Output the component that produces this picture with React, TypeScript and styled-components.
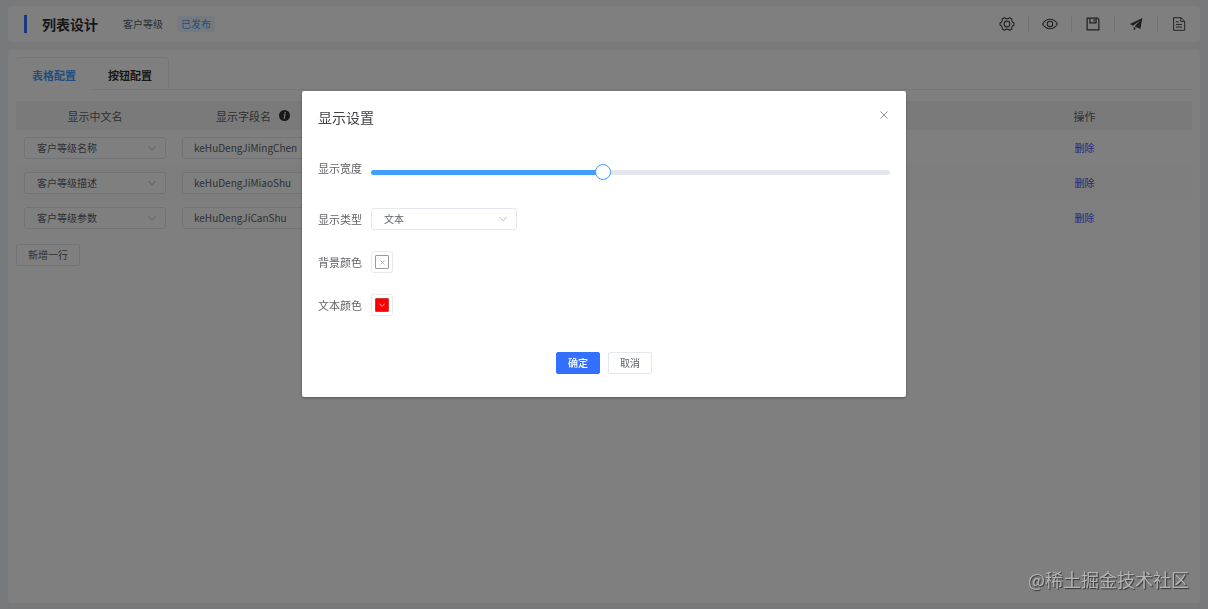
import React, { useState } from 'react';
import styled, { createGlobalStyle } from 'styled-components';

const GlobalStyle = createGlobalStyle`
  * { box-sizing: border-box; }
  body {
    margin: 0;
    background: #eff2f4;
    color: #606266;
    font-family: "Noto Sans CJK SC", sans-serif;
    font-size: 10px;
    line-height: 16px;
  }
  button, input, select { font: inherit; color: inherit; margin: 0; }
`;

const Page = styled.div`
  min-height: 100vh;
  padding: 6px 8px;
  display: flex;
  flex-direction: column;
  gap: 8px;
`;

const TopBar = styled.header`
  height: 36px;
  padding: 0 14px 0 16px;
  display: flex;
  align-items: center;
  background: #fff;
  border-radius: 4px;
`;

const Accent = styled.span`
  width: 3px;
  height: 18px;
  margin-right: 15px;
  background: #3370ff;
`;

const PageTitle = styled.h1`
  margin: 0 25px 0 0;
  font-size: 14px;
  line-height: 20px;
  font-weight: 700;
  color: #303133;
`;

const SubTitle = styled.span`
  margin-right: 14px;
`;

const Tag = styled.span`
  padding: 0 4px;
  border-radius: 2px;
  background: #ecf5ff;
  color: #409eff;
`;

const Tools = styled.nav`
  margin-left: auto;
  display: flex;
  align-items: center;
`;

const ToolButton = styled.button`
  width: 14px;
  height: 16px;
  padding: 0;
  border: 0;
  background: none;
  color: #404246;
  display: flex;
  align-items: center;
  justify-content: center;
  cursor: pointer;
  svg { flex: none; }
`;

const Divider = styled.span`
  width: 1px;
  height: 16px;
  margin: 0 14px;
  background: #e4e7ed;
`;

const Panel = styled.main`
  flex: 1;
  padding: 7px 8px;
  background: #fff;
  border-radius: 4px;
`;

const Tabs = styled.div`
  display: flex;
  height: 33px;
  margin-bottom: 11px;
`;

const Tab = styled.button<{ $active?: boolean }>`
  padding: 2px 16px 0;
  border: 0 solid #ebedf0;
  border-top-width: 1px;
  border-right-width: ${p => (p.$active ? 0 : 1)}px;
  border-bottom-width: ${p => (p.$active ? 0 : 1)}px;
  border-radius: ${p => (p.$active ? '4px 0 0 0' : '0 4px 0 0')};
  background: none;
  font-size: 11px;
  font-weight: 700;
  color: ${p => (p.$active ? '#409eff' : '#303133')};
  cursor: pointer;
`;

const TabRail = styled.span`
  flex: 1;
  border-bottom: 1px solid #ebedf0;
`;

const Table = styled.table`
  width: 100%;
  table-layout: fixed;
  border-collapse: collapse;
  text-align: center;
`;

const HeadCell = styled.th`
  height: 29px;
  padding: 0;
  background: #f4f4f5;
  font-size: 11px;
  font-weight: 400;
`;

const HeadLabel = styled.span`
  display: inline-flex;
  align-items: center;
  gap: 8px;
`;

const Row = styled.tr`
  &:nth-child(even) { background: #fafafa; }
`;

const Cell = styled.td`
  height: 35px;
  padding: 0 8px;
`;

const SelectBox = styled.span<{ $width?: string }>`
  display: grid;
  width: ${p => p.$width || '100%'};
  align-items: center;
  > * { grid-area: 1 / 1; }
  svg { justify-self: end; margin-right: 10px; pointer-events: none; }
`;

const SelectField = styled.select`
  appearance: none;
  width: 100%;
  height: 22px;
  padding: 0 24px 0 12px;
  border: 1px solid #e4e7ed;
  border-radius: 3px;
  background: #fff;
`;

const TextField = styled.input`
  display: block;
  width: 100%;
  height: 22px;
  padding: 0 11px;
  border: 1px solid #e4e7ed;
  border-radius: 3px;
  background: #fff;
`;

const LinkButton = styled.button`
  padding: 0;
  border: 0;
  background: none;
  color: #4a58f5;
  cursor: pointer;
`;

const Button = styled.button<{ $primary?: boolean }>`
  height: 22px;
  padding: 0 11px;
  border: 1px solid ${p => (p.$primary ? '#3370ff' : '#e4e7ed')};
  border-radius: 2px;
  background: ${p => (p.$primary ? '#3370ff' : '#fff')};
  color: ${p => (p.$primary ? '#fff' : '#606266')};
  font-weight: ${p => (p.$primary ? 500 : 400)};
  cursor: pointer;
`;

const AddArea = styled.div`
  padding-top: 9px;
`;

const Overlay = styled.div`
  position: fixed;
  inset: 0;
  background: rgba(0, 0, 0, 0.5);
`;

const Dialog = styled.section`
  width: 50%;
  margin: 15vh auto 0;
  padding: 16px 16px 23px;
  background: #fff;
  border-radius: 2px;
  box-shadow: 0 1px 3px rgba(0, 0, 0, 0.3);
`;

const DialogHead = styled.div`
  display: flex;
  align-items: flex-start;
  justify-content: space-between;
  margin-bottom: 30px;
`;

const DialogTitle = styled.h2`
  margin: 0;
  font-size: 14px;
  line-height: 20px;
  font-weight: 400;
  color: #404246;
`;

const CloseButton = styled.button`
  width: 12px;
  height: 16px;
  padding: 0;
  border: 0;
  background: none;
  color: #909399;
  display: flex;
  align-items: center;
  justify-content: center;
  cursor: pointer;
`;

const Form = styled.form`
  display: grid;
  grid-template-columns: 44px 1fr;
  column-gap: 9px;
  row-gap: 21px;
  align-items: center;
`;

const Label = styled.label<{ $top?: boolean }>`
  font-size: 11px;
  line-height: 22px;
  white-space: nowrap;
  padding-bottom: ${p => (p.$top ? 8 : 0)}px;
`;

const Slider = styled.input`
  appearance: none;
  width: 100%;
  height: 16px;
  background: none;
  &::-webkit-slider-runnable-track {
    height: 5px;
    border-radius: 3px;
    background: linear-gradient(to right, #409eff var(--fill), #e4e7ed var(--fill));
  }
  &::-webkit-slider-thumb {
    appearance: none;
    width: 16px;
    height: 16px;
    margin-top: -6px;
    border: 1px solid #409eff;
    border-radius: 50%;
    background: #fff;
  }
`;

const ColorButton = styled.button`
  width: 22px;
  height: 22px;
  padding: 3px;
  border: 1px solid #e9e9e9;
  border-radius: 3px;
  background: #fff;
  cursor: pointer;
`;

const Swatch = styled.span<{ $color?: string }>`
  width: 14px;
  height: 14px;
  display: flex;
  align-items: center;
  justify-content: center;
  border: 1px solid ${p => (p.$color ? '#c83c3c' : '#999')};
  border-radius: 1px;
  background: ${p => p.$color || '#fff'};
  color: ${p => (p.$color ? '#fff' : '#999')};
`;

const Actions = styled.div`
  display: flex;
  justify-content: center;
  gap: 8px;
  padding-top: 36px;
`;

const Watermark = styled.div`
  position: fixed;
  right: 19px;
  bottom: 18px;
  font: 18px/24px "Noto Sans CJK SC", sans-serif;
  color: #b4b4b4;
  text-shadow: 1px 1px 1px #333;
`;

const Icon = ({ size = 14, children }: { size?: number; children: React.ReactNode }) => (
  <svg width={size} height={size} viewBox="0 0 16 16" fill="none" stroke="currentColor" strokeWidth="1.1" aria-hidden="true">
    {children}
  </svg>
);

const Chevron = ({ size = 8, color = '#b4b8c0' }: { size?: number; color?: string }) => (
  <svg width={size} height={size} viewBox="0 0 8 8" fill="none" stroke={color} aria-hidden="true">
    <path d="M0.5 2.2 4 5.8 7.5 2.2" />
  </svg>
);

const Cross = ({ size }: { size: number }) => (
  <svg width={size} height={size} viewBox="0 0 8 8" fill="none" stroke="currentColor" aria-hidden="true">
    <path d="M0.5 0.5 7.5 7.5M7.5 0.5 0.5 7.5" />
  </svg>
);

const tools = [
  {
    name: '设置',
    icon: (
      <Icon size={16}>
        <path d="M5.4 1.700c.8.9 1.700 1.200 2.600 1.200s1.800-.3 2.600-1.200l2.200 1.300c-.3 1.100-.1 1.900.3 2.500.4.7 1 1.100 1.800 1.300v2.400c-.8.200-1.400.6-1.800 1.300-.4.600-.6 1.400-.3 2.500l-2.200 1.300c-.8-.9-1.700-1.200-2.600-1.200s-1.800.3-2.600 1.200L3.200 13c.3-1.100.1-1.900-.3-2.500-.4-.7-1-1.100-1.800-1.300V6.800c.8-.2 1.400-.6 1.800-1.300.4-.6.6-1.400.3-2.500z" />
        <circle cx="8" cy="8" r="2.900" />
      </Icon>
    ),
  },
  {
    name: '预览',
    icon: (
      <Icon size={16}>
        <path d="M.6 8C2.400 5 5 3.300 8 3.300S13.600 5 15.400 8C13.600 11 11 12.700 8 12.700S2.400 11 .6 8z" />
        <circle cx="8" cy="8" r="2.700" />
      </Icon>
    ),
  },
  {
    name: '保存',
    icon: (
      <Icon>
        <path d="M1.300 1.300h11.900l1.500 1.500v11.900H1.300zM4.500 1.300v5.400h7V1.300M9.300 2.500v2.500" strokeWidth="1.400" />
      </Icon>
    ),
  },
  {
    name: '发布',
    icon: (
      <Icon>
        <path d="M15.300 1 .9 8l3.700 1.900L12.600 4 6.400 10.800l6.600 2.900zM5.400 11.400v4.300l2.500-3.100z" fill="currentColor" stroke="none" />
      </Icon>
    ),
  },
  {
    name: '文档',
    icon: (
      <Icon>
        <path d="M1.800.8h8.500l4.200 4.100v10.300H1.800zM10 .8v4.300h4.500M4.500 5.500h3M4.500 8.500h7M4.500 11.500h7" />
      </Icon>
    ),
  },
];

const rows = [
  { label: '客户等级名称', field: 'keHuDengJiMingChen' },
  { label: '客户等级描述', field: 'keHuDengJiMiaoShu' },
  { label: '客户等级参数', field: 'keHuDengJiCanShu' },
];

export default function App() {
  const [width, setWidth] = useState(80);
  const max = 180;

  return (
    <>
      <GlobalStyle />
      <Page>
        <TopBar>
          <Accent />
          <PageTitle>列表设计</PageTitle>
          <SubTitle>客户等级</SubTitle>
          <Tag>已发布</Tag>
          <Tools>
            {tools.map((tool, i) => (
              <React.Fragment key={tool.name}>
                {i > 0 && <Divider />}
                <ToolButton type="button" aria-label={tool.name}>{tool.icon}</ToolButton>
              </React.Fragment>
            ))}
          </Tools>
        </TopBar>

        <Panel>
          <Tabs>
            <Tab type="button" $active>表格配置</Tab>
            <Tab type="button">按钮配置</Tab>
            <TabRail />
          </Tabs>
          <Table>
            <colgroup>
              <col style={{ width: 158 }} />
              <col style={{ width: 158 }} />
              <col />
              <col style={{ width: 215 }} />
            </colgroup>
            <thead>
              <tr>
                <HeadCell>显示中文名</HeadCell>
                <HeadCell>
                  <HeadLabel>
                    显示字段名
                    <svg width="11" height="11" viewBox="0 0 12 12" aria-hidden="true">
                      <circle cx="6" cy="6" r="6" fill="#303133" />
                      <circle cx="6.800" cy="3.100" r="0.900" fill="#fff" />
                      <path d="M4.900 5.200h1.700L5.600 9h1" fill="none" stroke="#fff" strokeWidth="1.100" />
                    </svg>
                  </HeadLabel>
                </HeadCell>
                <HeadCell />
                <HeadCell>操作</HeadCell>
              </tr>
            </thead>
            <tbody>
              {rows.map(row => (
                <Row key={row.field}>
                  <Cell>
                    <SelectBox>
                      <SelectField aria-label="显示中文名" defaultValue={row.label}>
                        <option>{row.label}</option>
                      </SelectField>
                      <Chevron />
                    </SelectBox>
                  </Cell>
                  <Cell>
                    <TextField aria-label="显示字段名" defaultValue={row.field} />
                  </Cell>
                  <Cell />
                  <Cell>
                    <LinkButton type="button">删除</LinkButton>
                  </Cell>
                </Row>
              ))}
            </tbody>
          </Table>
          <AddArea>
            <Button type="button">新增一行</Button>
          </AddArea>
        </Panel>
      </Page>

      <Overlay>
        <Dialog role="dialog" aria-modal="true" aria-labelledby="dialog-title">
          <DialogHead>
            <DialogTitle id="dialog-title">显示设置</DialogTitle>
            <CloseButton type="button" aria-label="关闭">
              <Cross size={8} />
            </CloseButton>
          </DialogHead>
          <Form>
            <Label htmlFor="width" $top>显示宽度</Label>
            <Slider
              id="width"
              type="range"
              min={0}
              max={max}
              value={width}
              onChange={e => setWidth(Number(e.target.value))}
              style={{ '--fill': `${(width / max) * 100}%` } as React.CSSProperties}
            />
            <Label htmlFor="type">显示类型</Label>
            <SelectBox $width="146px">
              <SelectField id="type" defaultValue="文本">
                <option>文本</option>
              </SelectField>
              <Chevron />
            </SelectBox>
            <Label htmlFor="background">背景颜色</Label>
            <ColorButton id="background" type="button">
              <Swatch><Cross size={5} /></Swatch>
            </ColorButton>
            <Label htmlFor="color">文本颜色</Label>
            <ColorButton id="color" type="button">
              <Swatch $color="#ff0000"><Chevron size={6} color="#fff" /></Swatch>
            </ColorButton>
          </Form>
          <Actions>
            <Button type="button" $primary>确定</Button>
            <Button type="button">取消</Button>
          </Actions>
        </Dialog>
      </Overlay>
      <Watermark>@稀土掘金技术社区</Watermark>
    </>
  );
}
